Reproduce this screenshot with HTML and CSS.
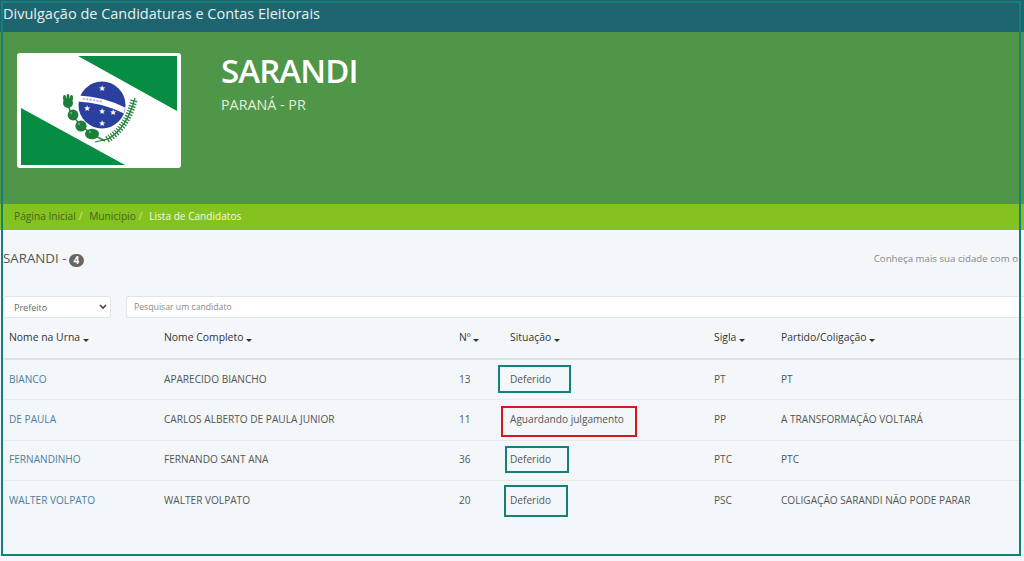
FILE: index.html
```html
<!DOCTYPE html>
<html lang="pt-br">
<head>
    <meta charset="UTF-8">
    <meta name="viewport" content="width=device-width, initial-scale=1.0">
    <title>Divulgação de Candidaturas e Contas Eleitorais</title>
    <link rel="stylesheet" href="styles.css">
</head>
<body>
    <div class="topo">Divulgação de Candidaturas e Contas Eleitorais</div>

    <div class="cidade">
        <div class="bandeira">
            <svg width="158" height="109" viewBox="21 56 156 109">
                <rect x="21" y="56" width="156" height="109" fill="#fff"/>
                <polygon points="78,56 177,56 177,111" fill="#068c43"/>
                <polygon points="21,108 21,165 125,165" fill="#068c43"/>
                <circle cx="102" cy="105" r="23.5" fill="#2b3f9f"/>
                <path d="M79 95.5 Q103 96.5 125 107.5 L124 113.5 Q102 102.5 78 101.5 Z" fill="#fff"/>
                <path id="curva" d="M83 100.2 Q103 101 122 110.5" fill="none"/>
                <text class="faixa"><textPath href="#curva">PARANÁ</textPath></text>
                <text x="102" y="91" class="estrela">★</text>
                <text x="87" y="111" class="estrela">★</text>
                <text x="102" y="114" class="estrela">★</text>
                <text x="113" y="115" class="estrela">★</text>
                <text x="102" y="126" class="estrela">★</text>

                <!-- ramo da esquerda -->
                <path d="M67 100 Q70 124 105 141" fill="none" stroke="#1c7f3a" stroke-width="1.6"/>
                <g fill="#1c7f3a">
                    <circle cx="68" cy="103" r="5"/>
                    <ellipse cx="64.5" cy="98" rx="1.5" ry="3"/>
                    <ellipse cx="71.5" cy="98" rx="1.5" ry="3"/>
                    <ellipse cx="68" cy="97" rx="1.5" ry="3"/>
                    <circle cx="73" cy="115" r="5.4"/>
                    <circle cx="81" cy="126" r="5.6"/>
                    <ellipse cx="92" cy="134" rx="7" ry="5.2"/>
                </g>
                <g fill="#5fae6c">
                    <circle cx="71" cy="113" r="1.2"/>
                    <circle cx="79" cy="124" r="1.2"/>
                    <circle cx="90" cy="132" r="1.2"/>
                </g>

                <!-- ramo da direita -->
                <path d="M95 142 L108 139 Q127 128 135 98" fill="none" stroke="#1c7f3a" stroke-width="1.2"/>
                <path d="M107 139.5 Q127 128 134 100" fill="none" stroke="#2a8a44" stroke-width="7" stroke-dasharray="1.3 1.5"/>
            </svg>
        </div>
        <div class="cidade-nome">
            <h1>SARANDI</h1>
            <p>PARANÁ - PR</p>
        </div>
    </div>

    <div class="breadcrumb">
        <span>Página Inicial</span><i>/</i>
        <span>Município</span><i>/</i>
        <span class="atual">Lista de Candidatos</span>
    </div>

    <div class="conteudo">
        <div class="linha-titulo">
            <h2>SARANDI - <b class="badge">4</b></h2>
            <span class="conheca">Conheça mais sua cidade com o</span>
        </div>

        <div class="filtros">
            <div class="select">Prefeito
                <svg width="8" height="6" viewBox="0 0 8 6"><path d="M1 1 L4 4 L7 1" fill="none" stroke="#444" stroke-width="1.6"/></svg>
            </div>
            <input type="text" placeholder="Pesquisar um candidato">
        </div>

        <table>
            <thead>
                <tr>
                    <th class="c1">Nome na Urna <u></u></th>
                    <th class="c2">Nome Completo <u></u></th>
                    <th class="c3">Nº <u></u></th>
                    <th class="c4">Situação <u></u></th>
                    <th class="c5">Sigla <u></u></th>
                    <th class="c6">Partido/Coligação <u></u></th>
                </tr>
            </thead>
            <tbody>
                <tr>
                    <td><a href="#">BIANCO</a></td>
                    <td>APARECIDO BIANCHO</td>
                    <td>13</td>
                    <td>Deferido</td>
                    <td>PT</td>
                    <td>PT</td>
                </tr>
                <tr>
                    <td><a href="#">DE PAULA</a></td>
                    <td>CARLOS ALBERTO DE PAULA JUNIOR</td>
                    <td>11</td>
                    <td>Aguardando julgamento</td>
                    <td>PP</td>
                    <td>A TRANSFORMAÇÃO VOLTARÁ</td>
                </tr>
                <tr>
                    <td><a href="#">FERNANDINHO</a></td>
                    <td>FERNANDO SANT ANA</td>
                    <td>36</td>
                    <td>Deferido</td>
                    <td>PTC</td>
                    <td>PTC</td>
                </tr>
                <tr>
                    <td><a href="#">WALTER VOLPATO</a></td>
                    <td>WALTER VOLPATO</td>
                    <td>20</td>
                    <td>Deferido</td>
                    <td>PSC</td>
                    <td>COLIGAÇÃO SARANDI NÃO PODE PARAR</td>
                </tr>
            </tbody>
        </table>
    </div>

    <!-- marcacoes feitas por cima da tela -->
    <div class="marca moldura"></div>
    <div class="marca m-bianco"></div>
    <div class="marca m-paula"></div>
    <div class="marca m-fernando"></div>
    <div class="marca m-walter"></div>
</body>
</html>
```

FILE: styles.css
```css
* {
    margin: 0;
    padding: 0;
    box-sizing: border-box;
    font-family: "Open Sans", Arial, sans-serif;
}

html, body {
    height: 561px;
    overflow: hidden;
}

body {
    position: relative;
    background-color: #f3f7f9;
    color: #555;
}

.topo {
    height: 32px;
    background-color: #1e6570;
    color: #e8f2f2;
    font-size: 14.5px;
    line-height: 28px;
    padding-left: 3px;
}

.cidade {
    height: 172px;
    background-color: #4f9648;
    display: flex;
    padding: 21px 0 0 17px;
}

.bandeira {
    width: 164px;
    height: 115px;
    background: white;
    border: 3px solid white;
    border-radius: 3px;
}

.bandeira svg {
    display: block;
}

.faixa {
    font-size: 3.2px;
    font-weight: 600;
    letter-spacing: 1.2px;
    fill: #5a69b5;
}

.estrela {
    font-size: 8px;
    fill: white;
    text-anchor: middle;
    font-family: "DejaVu Sans", sans-serif;
}

.cidade-nome {
    margin-left: 40px;
    color: white;
}

.cidade-nome h1 {
    font-size: 33px;
    font-weight: 600;
    line-height: 36px;
    letter-spacing: -0.9px;
}

.cidade-nome p {
    font-size: 14.3px;
    line-height: 20px;
    margin-top: 6px;
    color: #e3efdf;
}

.breadcrumb {
    height: 26px;
    background-color: #84c21f;
    font-size: 10.2px;
    line-height: 25px;
    padding-left: 14px;
    color: #45651c;
}

.breadcrumb i {
    font-style: normal;
    color: #cfe89a;
    margin: 0 4px 0 3px;
}

.breadcrumb .atual {
    color: #f4fae6;
    font-size: 10.1px;
}

.conteudo {
    padding-left: 3px;
}

.linha-titulo {
    height: 66px;
    display: flex;
    justify-content: space-between;
    padding: 18px 6px 0 0;
    white-space: nowrap;
}

.linha-titulo h2 {
    font-size: 13.3px;
    font-weight: 400;
    line-height: 20px;
    color: #555;
}

.badge {
    display: inline-block;
    width: 15px;
    height: 13px;
    line-height: 13px;
    border-radius: 7px;
    background-color: #666;
    color: white;
    font-size: 10px;
    text-align: center;
    vertical-align: -1px;
    margin-left: -1px;
}

.conheca {
    font-size: 9.7px;
    line-height: 22px;
    color: #888;
}

.filtros {
    display: flex;
    height: 22px;
}

.select {
    width: 108px;
    flex: none;
    background: white;
    border: 1px solid #dfe5e8;
    border-radius: 3px;
    font-size: 9px;
    line-height: 21px;
    padding: 0 3px 0 10px;
    color: #666;
    display: flex;
    justify-content: space-between;
    align-items: center;
}

input {
    margin-left: 15px;
    flex: 1;
    border: 1px solid #dfe5e8;
    border-right: none;
    border-radius: 3px 0 0 3px;
    background: white;
    font-size: 8.7px;
    padding: 0 7px;
    color: #666;
}

input::placeholder {
    color: #888;
}

table {
    border-collapse: collapse;
    table-layout: fixed;
    width: 1021px;
    font-size: 10.1px;
}

th {
    height: 41px;
    text-align: left;
    font-weight: 400;
    font-size: 10.4px;
    color: #333;
    padding: 0 6px 2px;
    border-bottom: 2px solid #dde2e5;
}

td {
    height: 40.5px;
    padding: 0 6px 2px;
    border-bottom: 1px solid #e6ebed;
    white-space: nowrap;
    color: #555;
}

tbody tr:last-child td {
    border-bottom: none;
}

a {
    color: #4b7ea0;
    text-decoration: none;
}

.c1 { width: 155px; }
.c2 { width: 295px; }
.c3 { width: 51px; }
.c4 { width: 204px; }
.c5 { width: 67px; }

th u {
    display: inline-block;
    width: 0;
    height: 0;
    border-left: 3.5px solid transparent;
    border-right: 3.5px solid transparent;
    border-top: 3.5px solid #333;
    vertical-align: -1px;
}

.marca {
    position: absolute;
    border: 2px solid #14807a;
}

.moldura {
    left: 1px;
    top: 1px;
    width: 1020px;
    height: 555px;
}

.m-bianco {
    left: 498px;
    top: 365px;
    width: 73px;
    height: 28px;
}

.m-paula {
    left: 501px;
    top: 406px;
    width: 136px;
    height: 31px;
    border-color: #d8161f;
}

.m-fernando {
    left: 505px;
    top: 446px;
    width: 64px;
    height: 27px;
}

.m-walter {
    left: 504px;
    top: 485px;
    width: 64px;
    height: 32px;
}
```
